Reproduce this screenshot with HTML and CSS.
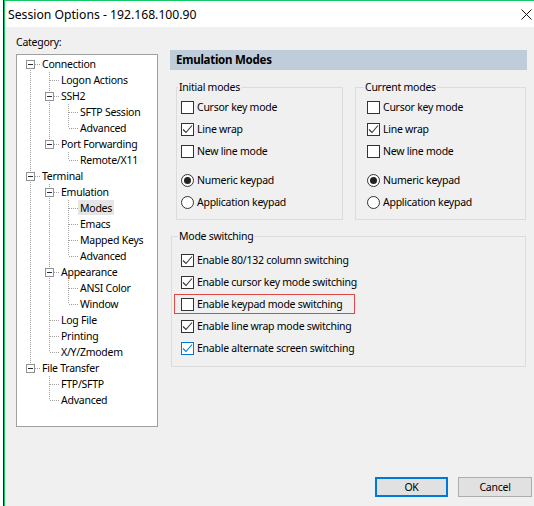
FILE: index.html
```html
<!DOCTYPE html>
<html>
<head>
<meta charset="utf-8">
<title>Session Options</title>
<link rel="stylesheet" href="styles.css">
</head>
<body>
<div class="window">
  <div class="titlebar">
    <span class="title">Session Options - 192.168.100.90</span>
    <svg class="close" width="11" height="11" viewBox="0 0 11 11"><path d="M0.5 0.5 L10.5 10.5 M10.5 0.5 L0.5 10.5" stroke="#111" stroke-width="1" fill="none"/></svg>
  </div>
  <div class="body">
    <div class="main">
      <div class="left">
        <div class="cat-label">Category:</div>
        <div class="tree">
          <svg class="tree-lines" width="140" height="371" viewBox="0 0 140 371">
            <g transform="translate(-17 -55)">
              <g class="dots" stroke="#a0a0a0" stroke-width="1" stroke-dasharray="1 1" fill="none" shape-rendering="crispEdges">
                <path d="M30.5 64 V368"/>
                <path d="M35 64.5 H41 M35 176.5 H41 M35 368.5 H41"/>
                <path d="M49.5 72 V144 M49.5 184 V352 M49.5 376 V400"/>
                <path d="M50 80.5 H60 M54 96.5 H60 M54 144.5 H60 M54 192.5 H60 M54 272.5 H60 M50 320.5 H60 M50 336.5 H60 M50 352.5 H60 M50 384.5 H60 M50 400.5 H60"/>
                <path d="M68.5 104 V128 M68.5 152 V160 M68.5 200 V256 M68.5 280 V304"/>
                <path d="M69 112.5 H79 M69 128.5 H79 M69 160.5 H79 M69 208.5 H79 M69 224.5 H79 M69 240.5 H79 M69 256.5 H79 M69 288.5 H79 M69 304.5 H79"/>
              </g>
              <g class="boxes" stroke="#919191" fill="#fff" shape-rendering="crispEdges">
                <rect x="26.5" y="60.5" width="8" height="8"/>
                <rect x="45.5" y="92.5" width="8" height="8"/>
                <rect x="45.5" y="140.5" width="8" height="8"/>
                <rect x="26.5" y="172.5" width="8" height="8"/>
                <rect x="45.5" y="188.5" width="8" height="8"/>
                <rect x="45.5" y="268.5" width="8" height="8"/>
                <rect x="26.5" y="364.5" width="8" height="8"/>
              </g>
              <g class="minus" stroke="#2a2a3a" stroke-width="1" fill="none" shape-rendering="crispEdges">
                <path d="M28 64.5 H33 M47 96.5 H52 M47 144.5 H52 M28 176.5 H33 M47 192.5 H52 M47 272.5 H52 M28 368.5 H33"/>
              </g>
            </g>
          </svg>
          <div class="node l1"><span class="t">Connection</span></div>
          <div class="node l2"><span class="t">Logon Actions</span></div>
          <div class="node l2"><span class="t">SSH2</span></div>
          <div class="node l3"><span class="t">SFTP Session</span></div>
          <div class="node l3"><span class="t">Advanced</span></div>
          <div class="node l2"><span class="t">Port Forwarding</span></div>
          <div class="node l3"><span class="t">Remote/X11</span></div>
          <div class="node l1"><span class="t">Terminal</span></div>
          <div class="node l2"><span class="t">Emulation</span></div>
          <div class="node l3"><span class="t selected">Modes</span></div>
          <div class="node l3"><span class="t">Emacs</span></div>
          <div class="node l3"><span class="t">Mapped Keys</span></div>
          <div class="node l3"><span class="t">Advanced</span></div>
          <div class="node l2"><span class="t">Appearance</span></div>
          <div class="node l3"><span class="t">ANSI Color</span></div>
          <div class="node l3"><span class="t">Window</span></div>
          <div class="node l2"><span class="t">Log File</span></div>
          <div class="node l2"><span class="t">Printing</span></div>
          <div class="node l2"><span class="t">X/Y/Zmodem</span></div>
          <div class="node l1"><span class="t">File Transfer</span></div>
          <div class="node l2"><span class="t">FTP/SFTP</span></div>
          <div class="node l2"><span class="t">Advanced</span></div>
        </div>
      </div>
      <div class="right">
        <div class="header">Emulation Modes</div>
        <div class="modes-row">
          <fieldset class="group initial">
            <legend>Initial modes</legend>
            <div class="opt"><span class="cb"></span>Cursor key mode</div>
            <div class="opt"><span class="cb checked"><svg width="11" height="11" viewBox="0 0 11 11"><path d="M1 5.5 L4 8.5 L10 1.5" stroke="#333" stroke-width="1.1" fill="none"/></svg></span>Line wrap</div>
            <div class="opt"><span class="cb"></span>New line mode</div>
            <div class="radios">
              <div class="opt"><span class="rb on"></span>Numeric keypad</div>
              <div class="opt"><span class="rb"></span>Application keypad</div>
            </div>
          </fieldset>
          <fieldset class="group current">
            <legend>Current modes</legend>
            <div class="opt"><span class="cb"></span>Cursor key mode</div>
            <div class="opt"><span class="cb checked"><svg width="11" height="11" viewBox="0 0 11 11"><path d="M1 5.5 L4 8.5 L10 1.5" stroke="#333" stroke-width="1.1" fill="none"/></svg></span>Line wrap</div>
            <div class="opt"><span class="cb"></span>New line mode</div>
            <div class="radios">
              <div class="opt"><span class="rb on"></span>Numeric keypad</div>
              <div class="opt"><span class="rb"></span>Application keypad</div>
            </div>
          </fieldset>
        </div>
        <fieldset class="group switching">
          <legend>Mode switching</legend>
          <div class="opt"><span class="cb checked"><svg width="11" height="11" viewBox="0 0 11 11"><path d="M1 5.5 L4 8.5 L10 1.5" stroke="#333" stroke-width="1.1" fill="none"/></svg></span>Enable 80/132 column switching</div>
          <div class="opt"><span class="cb checked"><svg width="11" height="11" viewBox="0 0 11 11"><path d="M1 5.5 L4 8.5 L10 1.5" stroke="#333" stroke-width="1.1" fill="none"/></svg></span>Enable cursor key mode switching</div>
          <div class="opt marked"><span class="cb"></span>Enable keypad mode switching</div>
          <div class="opt"><span class="cb checked"><svg width="11" height="11" viewBox="0 0 11 11"><path d="M1 5.5 L4 8.5 L10 1.5" stroke="#333" stroke-width="1.1" fill="none"/></svg></span>Enable line wrap mode switching</div>
          <div class="opt"><span class="cb checked hover"><svg width="11" height="11" viewBox="0 0 11 11"><path d="M1 5.5 L4 8.5 L10 1.5" stroke="#0078d7" stroke-width="1.1" fill="none"/></svg></span>Enable alternate screen switching</div>
        </fieldset>
      </div>
    </div>
    <div class="footer">
      <button class="btn ok">OK</button>
      <button class="btn">Cancel</button>
    </div>
  </div>
</div>
</body>
</html>
```

FILE: styles.css
```css
html, body {
  margin: 0;
  padding: 0;
  background: #ffffff;
}

body {
  font-family: "Noto Sans", "Liberation Sans", sans-serif;
  font-size: 10.5px;
  letter-spacing: -0.25px;
  color: #000;
}

.window {
  margin-left: 4px;
  width: 530px;
  height: 506px;
  box-sizing: border-box;
  border-left: 1px solid #17c964;
  border-top: 1px solid #17c964;
  box-shadow: -1px 0 0 #222;
  display: flex;
  flex-direction: column;
  overflow: hidden;
}

.titlebar {
  height: 26px;
  flex: none;
  background: #fff;
  display: flex;
  align-items: center;
  padding-left: 3px;
}

.title {
  font-size: 12.2px;
  letter-spacing: 0;
  color: #000;
}

.close {
  margin-left: auto;
  margin-right: 2px;
  display: block;
}

.body {
  flex: 1;
  background: #f0f0f0;
  display: flex;
  flex-direction: column;
}

.main {
  display: flex;
  padding: 7px 0 0 11px;
  gap: 12px;
}

.left {
  width: 142px;
  flex: none;
}

.cat-label {
  height: 16px;
  line-height: 16px;
}

.tree {
  margin-top: 4px;
  height: 373px;
  box-sizing: border-box;
  border: 1px solid #a0a0a0;
  background: #fff;
  padding-top: 1px;
  position: relative;
  overflow: hidden;
}

.tree-lines {
  position: absolute;
  left: 0;
  top: 0;
}

.node {
  height: 16px;
  line-height: 16px;
  white-space: nowrap;
  position: relative;
}

.node.l1 { padding-left: 23px; }
.node.l2 { padding-left: 42px; }
.node.l3 { padding-left: 61px; }

.t {
  padding: 0 2px;
  display: inline-block;
  height: 15px;
  line-height: 16px;
}

.t.selected {
  background: #e5e5e5;
}

.right {
  width: 357px;
  flex: none;
  margin-top: 16px;
}

.header {
  height: 20px;
  line-height: 20px;
  background: #bfcddb;
  padding-left: 6px;
  font-weight: bold;
  font-size: 11.5px;
}

.modes-row {
  display: flex;
  padding-left: 6px;
  gap: 12px;
  margin-top: 9px;
}

.group {
  margin: 0;
  border: 1px solid #dcdcdc;
  min-width: 0;
  box-sizing: border-box;
}

.group legend {
  padding: 0 1px;
  margin-left: -3px;
  height: 16px;
  line-height: 16px;
}

.initial {
  width: 167px;
  padding: 1px 0 6px 4px;
}

.current {
  width: 171px;
  padding: 1px 0 6px 11px;
}

.switching {
  margin-top: 8px;
  margin-left: 1px;
  width: 355px;
  padding: 5px 0 7px 9px;
}

.radios {
  margin-top: 7px;
}

.opt {
  height: 22px;
  display: flex;
  align-items: center;
  gap: 3px;
  white-space: nowrap;
}

.cb {
  width: 13px;
  height: 13px;
  box-sizing: border-box;
  border: 1px solid #333;
  background: #fff;
  flex: none;
  display: flex;
  align-items: center;
  justify-content: center;
}

.cb svg {
  display: block;
}

.cb.hover {
  border-color: #0078d7;
}

.rb {
  width: 13px;
  height: 13px;
  box-sizing: border-box;
  border: 1px solid #333;
  border-radius: 50%;
  background: #fff;
  flex: none;
  display: flex;
  align-items: center;
  justify-content: center;
}

.rb.on::before {
  content: "";
  width: 7px;
  height: 7px;
  border-radius: 50%;
  background: #222;
}

.marked {
  position: relative;
}

.marked::after {
  content: "";
  position: absolute;
  left: -7px;
  top: 1px;
  width: 181px;
  height: 20px;
  box-sizing: border-box;
  border: 1px solid #e04848;
}

.footer {
  margin-top: auto;
  display: flex;
  justify-content: flex-end;
  gap: 10px;
  padding: 0 2px 9px 0;
}

.btn {
  height: 20px;
  box-sizing: border-box;
  background: #e1e1e1;
  border: 1px solid #adadad;
  font-family: "Noto Sans", "Liberation Sans", sans-serif;
  font-size: 10.5px;
  letter-spacing: -0.25px;
  color: #000;
  padding: 0;
  width: 74px;
  margin: 0;
}

.btn.ok {
  width: 73px;
  border: 2px solid #0078d7;
}
```
